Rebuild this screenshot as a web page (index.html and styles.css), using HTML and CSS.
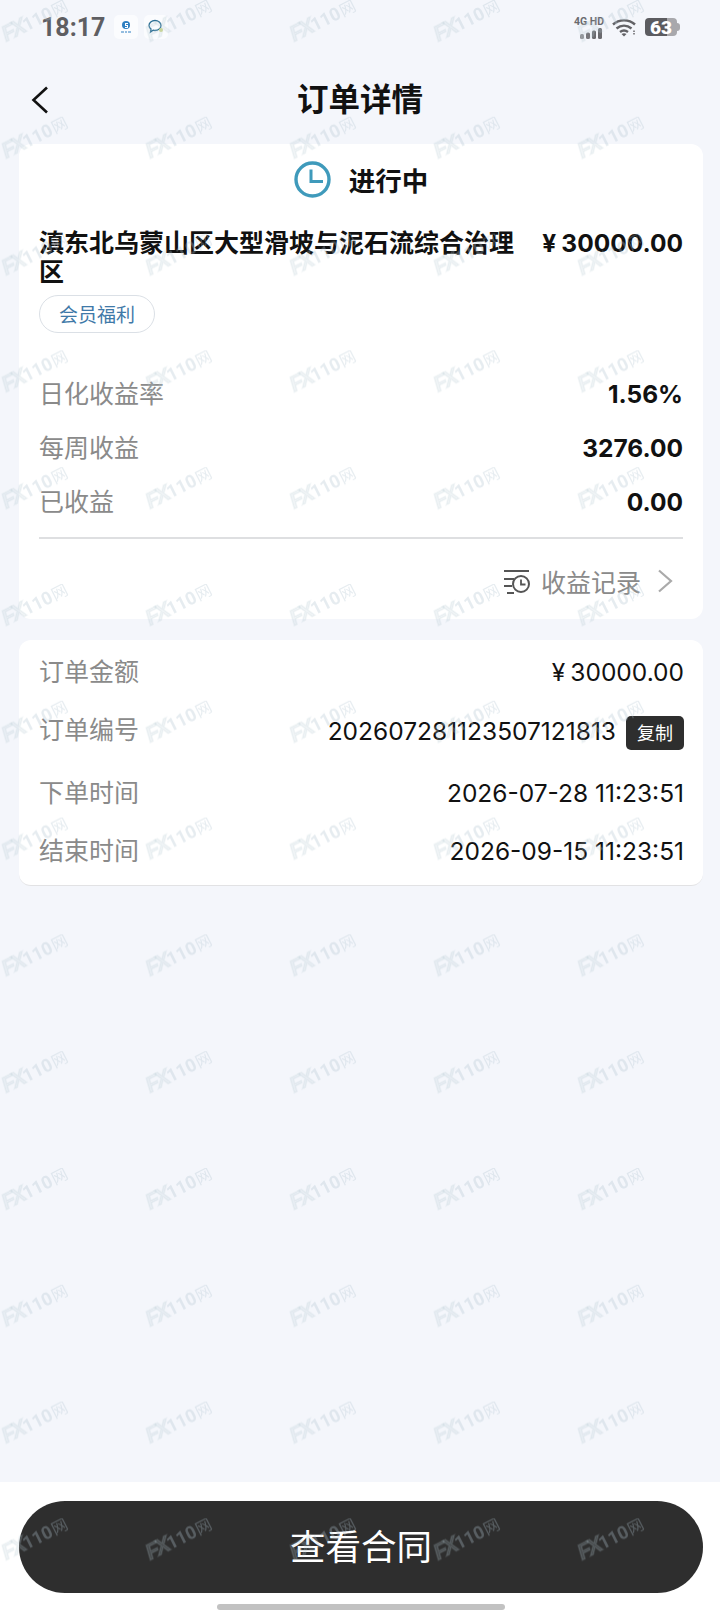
FILE: index.html
```html
<!DOCTYPE html>
<html lang="zh-CN">
<head>
    <meta charset="UTF-8">
    <meta name="viewport" content="width=device-width, initial-scale=1.0">
    <title>订单详情</title>
    <link rel="stylesheet" href="styles.css">
</head>
<body>
<div class="page">
    <div class="status-bar">
        <span class="clock">18:17</span>
        <span class="notify-icon">
            <svg width="16" height="16" viewBox="0 0 16 16"><circle cx="8" cy="6" r="4" fill="#2f7fc1"/><path d="M7 4h3v1H8v1h2v3H7V8h2V7H7z" fill="#fff"/><path d="M3 13h3M7 13h2M10 13h3" stroke="#2f7fc1" stroke-width="1.2"/></svg>
        </span>
        <span class="notify-icon">
            <svg width="18" height="18" viewBox="0 0 18 18"><path d="M8 2.5c3.4 0 6 2.200 6 5s-2.600 5-6 5c-.7 0-1.300-.1-1.900-.3L3.500 14l.5-3C2.800 10.100 2 8.900 2 7.500c0-2.800 2.600-5 6-5z" fill="none" stroke="#2c6f94" stroke-width="1.300"/><circle cx="14" cy="12" r="2" fill="#cfd98a"/></svg>
        </span>
        <span class="status-right">
            <span class="signal">
                <span class="signal-text">4G HD</span>
                <svg width="24" height="11" viewBox="0 0 24 11"><rect x="0" y="6" width="4" height="5" rx="1.500" fill="#8a8a8e"/><rect x="6" y="4.500" width="4" height="6.500" rx="1.500" fill="#77777b"/><rect x="12" y="2.500" width="4" height="8.500" rx="1.500" fill="#6a6a6e"/><rect x="18" y="0" width="4" height="11" rx="1.500" fill="#6a6a6e"/></svg>
            </span>
            <svg class="wifi" width="25" height="19" viewBox="0 0 25 19"><path d="M1 6.500C7 1 17 1 23 6.500M4.500 10.500c4.500-3.800 10.500-3.800 15 0M8 14c2.600-2 5.400-2 8 0" fill="none" stroke="#626266" stroke-width="2.400"/><path d="M12 18.500l-2.500-2.600c1.600-1 3.400-1 5 0z" fill="#626266"/><path d="M22 12.500v5" stroke="#8a8a8e" stroke-width="2" stroke-dasharray="1.500 1"/></svg>
            <span class="battery"><span class="battery-num">63</span></span>
        </span>
    </div>

    <header class="nav-bar">
        <svg class="back" width="18" height="28" viewBox="0 0 18 28"><path d="M16 1.500L2.500 14 16 26.500" fill="none" stroke="#111" stroke-width="2.600"/></svg>
        <h1>订单详情</h1>
    </header>

    <main class="content">
        <section class="card card-summary">
            <div class="state">
                <svg width="37" height="37" viewBox="0 0 37 37"><circle cx="18.500" cy="18.500" r="16.500" fill="none" stroke="#3f9abb" stroke-width="3.400"/><path d="M17 8.500V20.500H29" fill="none" stroke="#3f9abb" stroke-width="3"/></svg>
                <span>进行中</span>
            </div>
            <div class="product">
                <h2>滇东北乌蒙山区大型滑坡与泥石流综合治理区</h2>
                <span class="price"><span class="yen">¥</span>30000.00</span>
            </div>
            <span class="tag">会员福利</span>
            <div class="stats">
                <div class="stat"><span class="label">日化收益率</span><b>1.56%</b></div>
                <div class="stat"><span class="label">每周收益</span><b>3276.00</b></div>
                <div class="stat"><span class="label">已收益</span><b>0.00</b></div>
            </div>
            <div class="records">
                <svg width="28" height="26" viewBox="0 0 28 26"><path d="M1 3h25M1 11h10M1 18h8M4 25h7" fill="none" stroke="#555" stroke-width="2"/><circle cx="18" cy="16" r="8" fill="none" stroke="#555" stroke-width="2"/><path d="M18 11.500V16.500H22.500" fill="none" stroke="#555" stroke-width="1.800"/></svg>
                <span>收益记录</span>
                <svg class="chevron" width="16" height="24" viewBox="0 0 16 24"><path d="M2 1.500L14 12 2 22.500" fill="none" stroke="#aaa" stroke-width="2.200"/></svg>
            </div>
        </section>

        <section class="card card-info">
            <div class="info"><span class="label">订单金额</span><span class="value"><span class="yen">¥</span>30000.00</span></div>
            <div class="info info-order"><span class="label">订单编号</span><span class="value order-no">202607281123507121813<span class="copy">复制</span></span></div>
            <div class="info info-date"><span class="label">下单时间</span><span class="value">2026-07-28 11:23:51</span></div>
            <div class="info"><span class="label">结束时间</span><span class="value">2026-09-15 11:23:51</span></div>
        </section>
    </main>

    <footer class="bottom">
        <button class="contract" type="button">查看合同</button>
        <div class="home-bar"></div>
    </footer>

    <svg class="watermark" width="720" height="1612">
        <defs>
            <pattern id="mark" x="0" y="0" width="144" height="116.800" patternUnits="userSpaceOnUse">
                <g transform="translate(6 42) rotate(-27)">
                    <text class="mark-fx" x="0" y="0">FX</text>
                    <text class="mark-num" x="23" y="0">110</text>
                    <text class="mark-cn" x="55" y="0">网</text>
                </g>
            </pattern>
        </defs>
        <rect width="720" height="1612" fill="url(#mark)"/>
    </svg>
</div>
</body>
</html>
```

FILE: styles.css
```css
* {
    margin: 0;
    padding: 0;
    box-sizing: border-box;
}

body {
    font-family: "Noto Sans CJK SC", "Noto Sans", sans-serif;
    background-color: #f4f6fb;
    color: #111;
}

.page {
    position: relative;
    display: flex;
    flex-direction: column;
    height: 1612px;
    overflow: hidden;
}

/* status bar */
.status-bar {
    display: flex;
    align-items: center;
    height: 54px;
    padding: 0 40px 0 41px;
}

.clock {
    font-family: Roboto, sans-serif;
    font-size: 25px;
    font-weight: 700;
    color: #5e5e62;
    margin-right: 9px;
}

.notify-icon {
    display: flex;
    align-items: center;
    justify-content: center;
    width: 24px;
    height: 24px;
    margin-right: 6px;
    background-color: #fbfcfe;
    border-radius: 5px;
}

.status-right {
    display: flex;
    align-items: center;
    margin-left: auto;
}

.signal {
    display: flex;
    flex-direction: column;
    align-items: flex-end;
    margin-right: 8px;
}

.signal-text {
    font-family: Roboto, sans-serif;
    font-size: 10.500px;
    font-weight: 700;
    line-height: 12px;
    color: #6a6a6e;
}

.wifi {
    margin-right: 8px;
}

.battery {
    position: relative;
    display: flex;
    align-items: center;
    width: 32px;
    height: 18px;
    margin-right: 3px;
    background: linear-gradient(90deg, #5c5c60 0 68%, #a8a8ac 68% 100%);
    border-radius: 4px;
}

.battery::after {
    content: "";
    position: absolute;
    right: -3px;
    top: 5px;
    width: 3px;
    height: 8px;
    background-color: #a8a8ac;
    border-radius: 0 3px 3px 0;
}

.battery-num {
    width: 100%;
    text-align: center;
    font-family: Roboto, sans-serif;
    font-size: 19px;
    font-weight: 900;
    color: #fff;
}

/* nav */
.nav-bar {
    position: relative;
    height: 90px;
    display: flex;
    align-items: center;
    justify-content: center;
    padding-bottom: 4px;
}

.nav-bar h1 {
    font-size: 31.500px;
    font-weight: 700;
}

.back {
    position: absolute;
    left: 31px;
    top: 32px;
}

.content {
    flex: 1;
    padding: 0 17px 0 19px;
}

.card {
    background-color: #fff;
    border-radius: 12px;
}

.card-summary {
    height: 475px;
    padding: 0 20px 0 20px;
    margin-bottom: 21px;
}

.state {
    display: flex;
    align-items: center;
    justify-content: center;
    gap: 18px;
    height: 83px;
    padding-bottom: 13px;
    font-size: 26.500px;
    font-weight: 700;
}

.product {
    display: flex;
    justify-content: space-between;
    align-items: flex-start;
    gap: 24px;
}

.product h2 {
    flex: 1;
    font-size: 25px;
    font-weight: 700;
    line-height: 29px;
}

.price {
    padding-top: 2px;
    font-family: Inter, "Noto Sans", sans-serif;
    font-size: 24.500px;
    font-weight: 700;
    line-height: 29px;
    white-space: nowrap;
}

.yen {
    margin-right: 5px;
}

.tag {
    display: inline-block;
    height: 38px;
    margin-top: 10px;
    padding: 0 19px;
    font-size: 19px;
    line-height: 35px;
    color: #3f79a8;
    border: 1px solid #dbe0e6;
    border-radius: 19px;
}

.stats {
    margin-top: 32px;
    padding-bottom: 10px;
    border-bottom: 2px solid #dedfe1;
}

.stat {
    display: flex;
    justify-content: space-between;
    align-items: center;
    height: 54px;
}

.stat b {
    padding-top: 4px;
    font-family: Inter, "Noto Sans", sans-serif;
    font-size: 24.500px;
    font-weight: 700;
}

.label {
    font-size: 25px;
    color: #8a8a8a;
}

.records {
    display: flex;
    align-items: center;
    justify-content: flex-end;
    height: 84px;
    padding-right: 10px;
    font-size: 25px;
    color: #8a8a8a;
}

.records span {
    margin: 0 16px 0 10px;
}

.card-info {
    height: 246px;
    padding: 1px 19px 0 20px;
    border-bottom: 1px solid #e2e2e4;
}

.info {
    display: flex;
    justify-content: space-between;
    align-items: center;
    height: 58px;
}

.info-order {
    margin-bottom: 4px;
}

.info-date {
    height: 59px;
}

.value {
    padding-top: 4px;
    font-family: Inter, "Noto Sans", sans-serif;
    font-size: 24.500px;
}

.order-no {
    display: flex;
    align-items: center;
    margin-top: 2px;
}

.copy {
    width: 58px;
    height: 34px;
    margin: 4px 0 0 10px;
    font-family: "Noto Sans CJK SC", sans-serif;
    font-size: 18px;
    line-height: 33px;
    text-align: center;
    color: #fff;
    background-color: #2e2e2e;
    border-radius: 5px;
}

/* bottom action */
.bottom {
    height: 130px;
    padding: 19px 17px 0 19px;
    background-color: #fff;
}

.contract {
    display: block;
    width: 100%;
    height: 92px;
    padding-bottom: 6px;
    font-family: inherit;
    font-size: 35.500px;
    color: #fff;
    background-color: #2e2e2e;
    border: none;
    border-radius: 46px;
}

.home-bar {
    width: 288px;
    height: 6px;
    margin: 11px auto 0;
    background-color: #c2c2c2;
    border-radius: 3px;
}

/* repeated site watermark over the whole screen */
.watermark {
    position: absolute;
    left: 0;
    top: 0;
    pointer-events: none;
}

.watermark text {
    fill: #b3c6d0;
    fill-opacity: .32;
}

.watermark .mark-fx {
    font-family: "Liberation Sans", sans-serif;
    font-size: 22px;
    font-weight: 700;
    font-style: italic;
    letter-spacing: -3px;
    fill-opacity: .2;
    stroke: #b3c6d0;
    stroke-opacity: .14;
    stroke-width: 1.500px;
}

.mark-num {
    font-family: Roboto, sans-serif;
    font-size: 18px;
    font-weight: 700;
}

.mark-cn {
    font-size: 16px;
}
```
